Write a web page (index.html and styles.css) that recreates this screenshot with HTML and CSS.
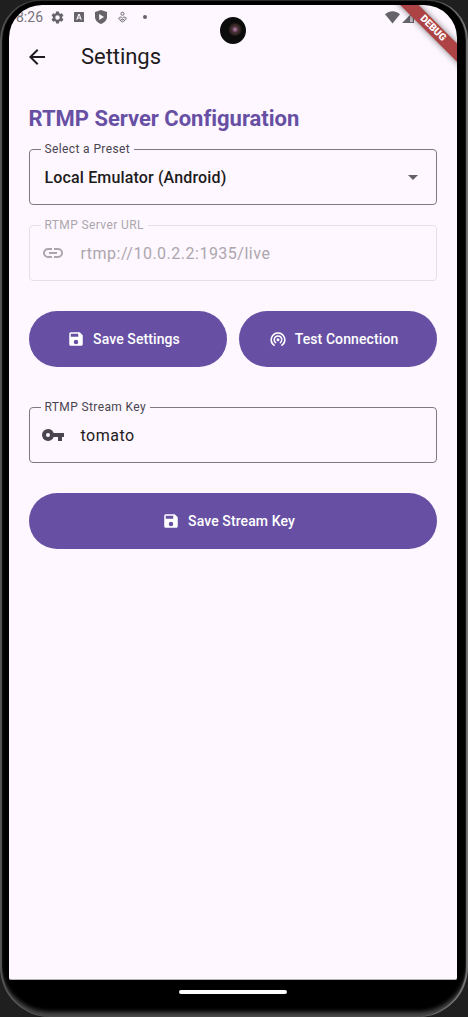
FILE: index.html
```html
<!DOCTYPE html>
<html lang="en">
<head>
<meta charset="utf-8">
<title>Settings</title>
<link rel="stylesheet" href="styles.css">
</head>
<body>
<div class="phone">
  <div class="screen">
    <header class="status">
      <span class="clock">8:26</span>
      <svg class="st gear" viewBox="0 0 24 24"><path d="M19.14 12.94c.04-.3.06-.61.06-.94s-.02-.64-.07-.94l2.03-1.58c.18-.14.23-.41.12-.61l-1.92-3.32c-.12-.22-.37-.29-.59-.22l-2.39.96c-.5-.38-1.03-.7-1.62-.94l-.36-2.54c-.04-.24-.24-.41-.48-.41h-3.84c-.24 0-.43.17-.47.41l-.36 2.54c-.59.24-1.13.57-1.62.94l-2.39-.96c-.22-.08-.47 0-.59.22L2.74 8.87c-.12.21-.08.47.12.61l2.03 1.58c-.05.3-.09.63-.09.94s.02.64.07.94l-2.03 1.58c-.18.14-.23.41-.12.61l1.92 3.32c.12.22.37.29.59.22l2.39-.96c.5.38 1.03.7 1.62.94l.36 2.54c.05.24.24.41.48.41h3.84c.24 0 .44-.17.47-.41l.36-2.54c.59-.24 1.13-.56 1.62-.94l2.39.96c.22.08.47 0 .59-.22l1.92-3.32c.12-.22.07-.47-.12-.61zM12 15.6A3.6 3.6 0 1 1 12 8.400a3.600 3.600 0 0 1 0 7.200z"/></svg>
      <svg class="st box" viewBox="0 0 10 10"><path fill-rule="evenodd" d="M.5 0h9q.5 0 .5.5v9q0 .5-.5.5h-9Q0 10 0 9.500v-9Q0 0 .5 0zM4.300 2 2.200 7.800h1.200l.4-1.200h2.400l.4 1.200h1.200L5.700 2zM5 3.300l.8 2.300H4.200z"/></svg>
      <svg class="st shield" viewBox="0 0 12 14"><path fill-rule="evenodd" d="M6 0l6 2v5c0 3.200-2.500 5.800-6 7-3.500-1.200-6-3.800-6-7V2zM4.200 4v6L9 7z"/></svg>
      <svg class="st person" viewBox="0 0 10 12"><g fill="none" stroke="#666369" stroke-width="1.100"><circle cx="5" cy="2.400" r="1.700"/><path d="M5 7.200C3.800 5.500 1 5.800 1 7.700c0 1.500 2 2.500 4 3.800 2-1.300 4-2.300 4-3.800 0-1.900-2.800-2.200-4-.5zM2.800 8.200 5 9.300l2.200-1.100"/></g></svg>
      <span class="dot"></span>
      <span class="radios">
        <svg class="st wifi" viewBox="0 0 15 13"><path d="M7.500 12.500 0 3.200C4.500-.7 10.500-.7 15 3.200z"/></svg>
        <svg class="st cell" viewBox="0 0 12 12"><path d="M0 12 12 0v12zM8 5.400V11h3V2.400z" fill-rule="evenodd"/><path opacity=".35" d="M8 5.400V11h3V2.400z"/></svg>
      </span>
    </header>
    <div class="appbar">
      <svg class="back" viewBox="0 0 24 24"><path d="M20 11H7.830l5.590-5.590L12 4l-8 8 8 8 1.410-1.410L7.830 13H20z"/></svg>
      <h1>Settings</h1>
    </div>
    <main>
      <h2>RTMP Server Configuration</h2>
      <div class="field preset">
        <label>Select a Preset</label>
        <span class="choice">Local Emulator (Android)</span>
        <svg class="arrow" viewBox="0 0 10 5"><path d="M0 0h10L5 5z"/></svg>
      </div>
      <div class="field url">
        <label>RTMP Server URL</label>
        <svg class="lead" viewBox="0 0 24 24"><path d="M3.900 12c0-1.710 1.390-3.100 3.100-3.100h4V7H7a5 5 0 0 0 0 10h4v-1.900H7c-1.710 0-3.100-1.390-3.100-3.100zM8 13h8v-2H8zm9-6h-4v1.900h4a3.100 3.100 0 0 1 0 6.200h-4V17h4a5 5 0 0 0 0-10z"/></svg>
        <span class="value">rtmp://10.0.2.2:1935/live</span>
      </div>
      <div class="row">
        <button class="btn"><svg viewBox="0 0 24 24"><path d="M17 3H5a2 2 0 0 0-2 2v14a2 2 0 0 0 2 2h14c1.100 0 2-.9 2-2V7zm-5 16a3 3 0 1 1 0-6 3 3 0 0 1 0 6zm3-10H5V5h10z"/></svg><span>Save Settings</span></button>
        <button class="btn"><svg viewBox="0 0 24 24"><path d="M12 11a2 2 0 0 0 0 4 2 2 0 0 0 0-4zm6 2a6 6 0 1 0-9 5.190l1-1.740a4 4 0 1 1 4 0l1 1.740A5.980 5.980 0 0 0 18 13zM12 3A10 10 0 0 0 7 21.660l1-1.730a8 8 0 1 1 8 0l1 1.730A10 10 0 0 0 12 3z"/></svg><span>Test Connection</span></button>
      </div>
      <div class="field key">
        <label>RTMP Stream Key</label>
        <svg class="lead" viewBox="0 0 24 24"><path d="M12.650 10A5.990 5.990 0 0 0 7 6a6 6 0 1 0 5.650 8H17v4h4v-4h2v-4zM7 14a2 2 0 1 1 0-4 2 2 0 0 1 0 4z"/></svg>
        <span class="value">tomato</span>
      </div>
      <button class="btn"><svg viewBox="0 0 24 24"><path d="M17 3H5a2 2 0 0 0-2 2v14a2 2 0 0 0 2 2h14c1.100 0 2-.9 2-2V7zm-5 16a3 3 0 1 1 0-6 3 3 0 0 1 0 6zm3-10H5V5h10z"/></svg><span>Save Stream Key</span></button>
    </main>
    <div class="ribbon"><span>DEBUG</span></div>
  </div>
  <div class="camera"></div>
  <div class="home"></div>
</div>
</body>
</html>
```
FILE: styles.css
```css
* { box-sizing: border-box; }
body {
  margin: 0;
  width: 468px;
  height: 1017px;
  overflow: hidden;
  background: #1f1f1f;
  font-family: Roboto, sans-serif;
  color: #1d1b20;
}
h1, h2 { margin: 0; white-space: nowrap; }
.phone {
  position: relative;
  width: 468px;
  height: 1017px;
  padding: 5px 11px 0 9px;
  background: #000;
  border-radius: 40px 40px 50px 50px;
  box-shadow: inset 2px 0 1px #555, inset -2px 0 1px #777, inset 0 -5px 4px #484848, inset 0 1px 1px #222;
}
.screen {
  position: relative;
  height: 975px;
  overflow: hidden;
  background: #fef7ff;
  border-radius: 33px 33px 2px 2px;
  border-bottom: 1px solid #b5b1b7;
}
.status {
  display: flex;
  align-items: center;
  height: 24px;
  padding-left: 7px;
}
.st { fill: #666369; flex: none; }
.clock { width: 28px; font-size: 14px; color: #77737a; white-space: nowrap; }
.gear { width: 15px; height: 15px; margin-left: 6px; }
.box { width: 10px; height: 10px; margin-left: 9px; }
.shield { width: 12px; height: 14px; margin-left: 11px; }
.person { width: 9px; height: 12px; margin-left: 11px; }
.dot { width: 4px; height: 4px; margin-left: 16px; border-radius: 50%; background: #666369; }
.radios { display: flex; margin-left: 238px; gap: 2px; }
.wifi { width: 15px; height: 13px; }
.cell { width: 12px; height: 12px; }
.appbar { display: flex; align-items: center; height: 56px; padding-left: 16px; }
.back { width: 24px; height: 24px; fill: #1d1b20; }
h1 { margin-left: 32px; font-size: 22px; line-height: 28px; font-weight: 400; letter-spacing: -.05px; }
main { padding: 18px 20.5px 0 19.5px; }
h2 { height: 46px; line-height: 31px; font-size: 22px; font-weight: 700; letter-spacing: -.02px; color: #6750a4; }
.field {
  position: relative;
  display: flex;
  align-items: center;
  height: 56px;
  border: 1px solid #7e7982;
  border-radius: 4px;
}
.field label {
  position: absolute;
  left: 11px;
  top: -9px;
  padding: 0 4px;
  background: #fef7ff;
  font-size: 12px;
  line-height: 16px;
  letter-spacing: .38px;
  color: #49454f;
  white-space: nowrap;
}
.preset { justify-content: space-between; padding: 0 18px 0 15px; }
.choice { font-size: 16px; font-weight: 500; letter-spacing: .15px; }
.arrow { width: 10px; height: 5px; fill: #625f65; }
.url { margin-top: 20px; border-color: #e5dfe7; }
.url label, .url .value { color: #aba6ad; }
.url .lead { fill: #aba6ad; }
.lead { width: 24px; height: 24px; margin: 0 16px 0 11px; fill: #49454f; }
.value { font-size: 16px; letter-spacing: .5px; }
.row { display: flex; gap: 12px; margin: 30px 0 40px; }
.btn {
  display: flex;
  flex: 1;
  align-items: center;
  justify-content: center;
  gap: 8px;
  width: 100%;
  height: 56px;
  padding: 0 8px 0 0;
  border: 0;
  border-radius: 28px;
  background: #6750a4;
  color: #fff;
  font: 500 14px Roboto, sans-serif;
  letter-spacing: .1px;
}
.btn svg { width: 18px; height: 18px; fill: #fff; }
.key { margin-bottom: 30px; }
.ribbon {
  position: absolute;
  left: 358px;
  top: 17px;
  width: 130px;
  height: 12.500px;
  transform: rotate(45deg);
  background: #ae4345;
  box-shadow: 0 0 6px #0008;
  color: #fff;
  font-size: 10px;
  line-height: 12.500px;
  font-weight: 900;
  text-align: center;
}
.ribbon { margin-left: 1px; }
.camera {
  position: absolute;
  left: 220px;
  top: 17px;
  width: 26px;
  height: 27px;
  border-radius: 50%;
  background: radial-gradient(circle at 58% 46%, #a07090 0 1px, #4b3040 3px, #352921 5px, #0c0c0c 7px);
}
.home {
  position: absolute;
  left: 179px;
  top: 990px;
  width: 108px;
  height: 4px;
  border-radius: 2px;
  background: #fff;
}
```
